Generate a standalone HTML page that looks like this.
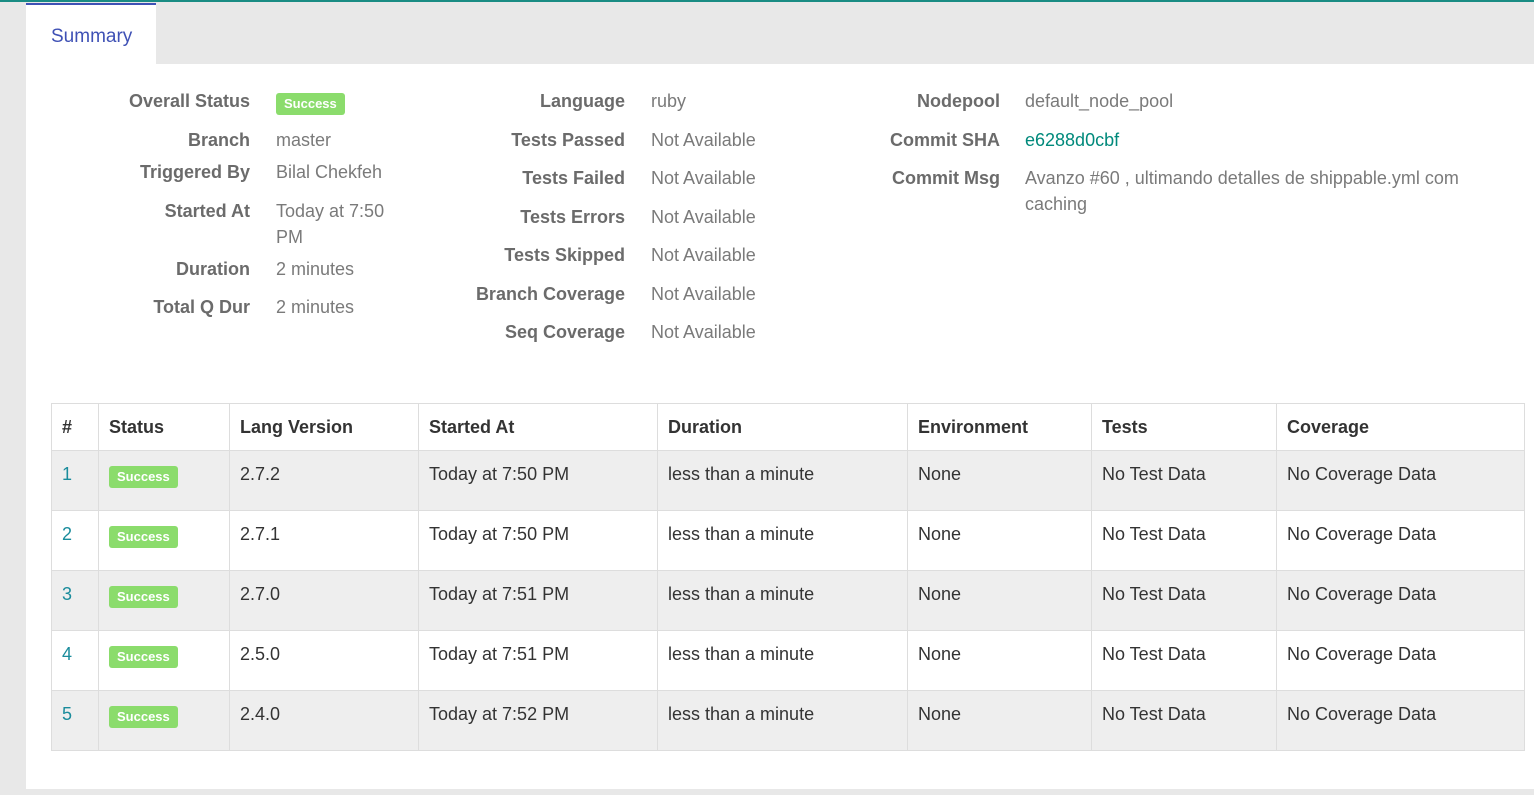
<!DOCTYPE html>
<html><head><meta charset="utf-8">
<style>
*{margin:0;padding:0;box-sizing:border-box}
body{width:1534px;height:795px;background:#e8e8e8;font-family:"Liberation Sans",sans-serif;position:relative;overflow:hidden}
.top{position:absolute;left:0;top:0;width:1534px;height:2px;background:#1a8c84}
.page{position:absolute;left:26px;top:3px;width:1508px;height:786px;background:#fff}
.hdr{position:absolute;left:156px;top:3px;width:1378px;height:61px;background:#e8e8e8}
.tab{position:absolute;left:26px;top:3px;width:130px;height:61px;background:#fff;border-top:2px solid #3f51b5}
.tab span{position:absolute;left:25px;top:21px;font-size:19px;color:#3f51b5}
.l,.v{position:absolute;font-size:18px;line-height:26px;white-space:nowrap}
.l{font-weight:bold;color:#6b6b6b;text-align:right}
.v{color:#7a7a7a}
.badge{display:inline-block;background:#8bdc6c;color:#fff;font-weight:bold;font-size:13px;line-height:22px;padding:0 8px;border-radius:3px}
table{position:absolute;left:51px;top:403px;border-collapse:collapse;table-layout:fixed;width:1473px;font-size:18px;color:#333}
td,th{border:1px solid #ddd;text-align:left;vertical-align:top;padding:13px 10px 0 10px}
th{height:47px;font-weight:bold;color:#333}
td{height:60px}
tr.g td{background:#eee}
td a{color:#1a8c9c;text-decoration:none}
</style></head><body>
<div class="top"></div>
<div class="page"></div>
<div class="hdr"></div>
<div class="tab"><span>Summary</span></div>

<div class="l" style="right:1284px;top:88px">Overall Status</div>
<div class="v" style="left:276px;top:89px"><span class="badge">Success</span></div>
<div class="l" style="right:1284px;top:127px">Branch</div><div class="v" style="left:276px;top:127px">master</div>
<div class="l" style="right:1284px;top:159px">Triggered By</div><div class="v" style="left:276px;top:159px">Bilal Chekfeh</div>
<div class="l" style="right:1284px;top:198px">Started At</div><div class="v" style="left:276px;top:198px">Today at 7:50<br>PM</div>
<div class="l" style="right:1284px;top:256px">Duration</div><div class="v" style="left:276px;top:256px">2 minutes</div>
<div class="l" style="right:1284px;top:294px">Total Q Dur</div><div class="v" style="left:276px;top:294px">2 minutes</div>

<div class="l" style="right:909px;top:88px">Language</div><div class="v" style="left:651px;top:88px">ruby</div>
<div class="l" style="right:909px;top:127px">Tests Passed</div><div class="v" style="left:651px;top:127px">Not Available</div>
<div class="l" style="right:909px;top:165px">Tests Failed</div><div class="v" style="left:651px;top:165px">Not Available</div>
<div class="l" style="right:909px;top:204px">Tests Errors</div><div class="v" style="left:651px;top:204px">Not Available</div>
<div class="l" style="right:909px;top:242px">Tests Skipped</div><div class="v" style="left:651px;top:242px">Not Available</div>
<div class="l" style="right:909px;top:281px">Branch Coverage</div><div class="v" style="left:651px;top:281px">Not Available</div>
<div class="l" style="right:909px;top:319px">Seq Coverage</div><div class="v" style="left:651px;top:319px">Not Available</div>

<div class="l" style="right:534px;top:88px">Nodepool</div><div class="v" style="left:1025px;top:88px">default_node_pool</div>
<div class="l" style="right:534px;top:127px">Commit SHA</div><div class="v" style="left:1025px;top:127px;color:#00897b">e6288d0cbf</div>
<div class="l" style="right:534px;top:165px">Commit Msg</div><div class="v" style="left:1025px;top:165px">Avanzo #60 , ultimando detalles de shippable.yml com<br>caching</div>

<table>
<colgroup><col style="width:47px"><col style="width:131px"><col style="width:189px"><col style="width:239px"><col style="width:250px"><col style="width:184px"><col style="width:185px"><col style="width:248px"></colgroup>
<tr><th>#</th><th>Status</th><th>Lang Version</th><th>Started At</th><th>Duration</th><th>Environment</th><th>Tests</th><th>Coverage</th></tr>
<tr class="g"><td><a>1</a></td><td><span class="badge" style="margin-top:2px">Success</span></td><td>2.7.2</td><td>Today at 7:50 PM</td><td>less than a minute</td><td>None</td><td>No Test Data</td><td>No Coverage Data</td></tr>
<tr><td><a>2</a></td><td><span class="badge" style="margin-top:2px">Success</span></td><td>2.7.1</td><td>Today at 7:50 PM</td><td>less than a minute</td><td>None</td><td>No Test Data</td><td>No Coverage Data</td></tr>
<tr class="g"><td><a>3</a></td><td><span class="badge" style="margin-top:2px">Success</span></td><td>2.7.0</td><td>Today at 7:51 PM</td><td>less than a minute</td><td>None</td><td>No Test Data</td><td>No Coverage Data</td></tr>
<tr><td><a>4</a></td><td><span class="badge" style="margin-top:2px">Success</span></td><td>2.5.0</td><td>Today at 7:51 PM</td><td>less than a minute</td><td>None</td><td>No Test Data</td><td>No Coverage Data</td></tr>
<tr class="g"><td><a>5</a></td><td><span class="badge" style="margin-top:2px">Success</span></td><td>2.4.0</td><td>Today at 7:52 PM</td><td>less than a minute</td><td>None</td><td>No Test Data</td><td>No Coverage Data</td></tr>
</table>
</body></html>
